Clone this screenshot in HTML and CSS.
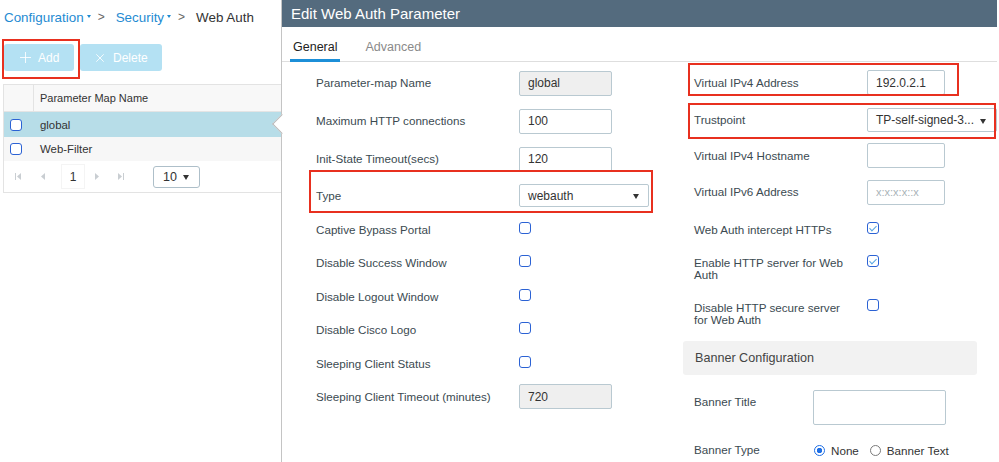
FILE: index.html
```html
<!DOCTYPE html>
<html lang="en">
<head>
<meta charset="utf-8">
<title>Edit Web Auth Parameter</title>
<link rel="stylesheet" href="styles.css">
</head>
<body>
<div class="page">
  <aside class="list-pane">
    <nav class="crumbs">
      <span class="crumb">Configuration<span class="crumb-caret"></span></span>
      <span class="crumb-sep">&gt;</span>
      <span class="crumb">Security<span class="crumb-caret"></span></span>
      <span class="crumb-sep">&gt;</span>
      <span class="crumb-current">Web Auth</span>
    </nav>
    <div class="toolbar">
      <button class="btn btn-add" type="button">
        <svg class="btn-icon" width="11" height="11" viewBox="0 0 11 11"><path d="M5.5 0v11M0 5.5h11" stroke="#ffffff" stroke-opacity="0.85" stroke-width="1"/></svg>
        <span>Add</span>
      </button>
      <button class="btn btn-delete" type="button">
        <svg class="btn-icon" width="8" height="8" viewBox="0 0 8 8"><path d="M0.3 0.3l7.4 7.4M7.7 0.3L0.3 7.7" stroke="#ffffff" stroke-opacity="0.85" stroke-width="1"/></svg>
        <span>Delete</span>
      </button>
    </div>
    <div class="grid">
      <div class="grid-head">
        <div class="grid-check"></div>
        <div class="grid-name">Parameter Map Name</div>
      </div>
      <div class="grid-row is-selected">
        <div class="grid-check"><span class="cb"></span></div>
        <div class="grid-name">global</div>
      </div>
      <div class="grid-row">
        <div class="grid-check"><span class="cb"></span></div>
        <div class="grid-name">Web-Filter</div>
      </div>
      <div class="pager">
        <svg class="pg-first" width="6" height="7" viewBox="0 0 6 7"><rect x="0" y="0" width="1" height="7" fill="#c9ced2"/><path d="M6 0v7L2 3.5z" fill="#c9ced2"/></svg>
        <svg class="pg-prev" width="4" height="7" viewBox="0 0 4 7"><path d="M4 0v7L0 3.5z" fill="#c9ced2"/></svg>
        <div class="pg-page">1</div>
        <svg class="pg-next" width="4" height="7" viewBox="0 0 4 7"><path d="M0 0v7L4 3.5z" fill="#c9ced2"/></svg>
        <svg class="pg-last" width="6" height="7" viewBox="0 0 6 7"><path d="M0 0v7L4 3.5z" fill="#c9ced2"/><rect x="5" y="0" width="1" height="7" fill="#c9ced2"/></svg>
        <div class="pg-size">10<span class="select-caret"></span></div>
      </div>
    </div>
  </aside>

  <section class="modal">
    <header class="modal-head">Edit Web Auth Parameter</header>
    <div class="tabs">
      <span class="tab is-active">General</span>
      <span class="tab">Advanced</span>
    </div>
    <div class="form">
      <div class="form-col form-col-left">
        <div class="field f-std"><label class="field-label">Parameter-map Name</label><div class="input is-disabled">global</div></div>
        <div class="field f-std"><label class="field-label">Maximum HTTP connections</label><div class="input">100</div></div>
        <div class="field f-std"><label class="field-label">Init-State Timeout(secs)</label><div class="input">120</div></div>
        <div class="field f-type"><label class="field-label">Type</label><div class="select select-type">webauth<span class="select-caret"></span></div></div>
        <div class="field f-check"><label class="field-label">Captive Bypass Portal</label><span class="cb"></span></div>
        <div class="field f-check"><label class="field-label">Disable Success Window</label><span class="cb"></span></div>
        <div class="field f-check"><label class="field-label">Disable Logout Window</label><span class="cb"></span></div>
        <div class="field f-check"><label class="field-label">Disable Cisco Logo</label><span class="cb"></span></div>
        <div class="field f-check"><label class="field-label">Sleeping Client Status</label><span class="cb"></span></div>
        <div class="field f-last"><label class="field-label">Sleeping Client Timeout (minutes)</label><div class="input is-disabled">720</div></div>
      </div>

      <div class="form-col form-col-right">
        <div class="field r-a"><label class="field-label">Virtual IPv4 Address</label><div class="input input-narrow">192.0.2.1</div></div>
        <div class="field r-b"><label class="field-label">Trustpoint</label><div class="select select-tp">TP-self-signed-3...<span class="select-caret"></span></div></div>
        <div class="field r-c"><label class="field-label">Virtual IPv4 Hostname</label><div class="input input-narrow"></div></div>
        <div class="field r-d"><label class="field-label">Virtual IPv6 Address</label><div class="input input-narrow is-placeholder">x:x:x:x::x</div></div>
        <div class="field f-check r-e"><label class="field-label">Web Auth intercept HTTPs</label><span class="cb is-checked"></span></div>
        <div class="field f-check r-f"><label class="field-label two-line">Enable HTTP server for Web Auth</label><span class="cb is-checked"></span></div>
        <div class="field f-check r-g"><label class="field-label two-line">Disable HTTP secure server for Web Auth</label><span class="cb"></span></div>
        <div class="section-head">Banner Configuration</div>
        <div class="field r-title"><label class="field-label">Banner Title</label><div class="input input-wide"></div></div>
        <div class="field r-type">
          <label class="field-label">Banner Type</label>
          <div class="radios">
            <span class="radio-opt"><span class="radio is-on"></span>None</span>
            <span class="radio-opt"><span class="radio"></span>Banner Text</span>
            <span class="radio-opt"><span class="radio"></span></span>
          </div>
        </div>
      </div>
    </div>
  </section>

  <div class="pointer"></div>
  <div class="mark mark-add"></div>
  <div class="mark mark-type"></div>
  <div class="mark mark-ipv4"></div>
  <div class="mark mark-tp"></div>
</div>
</body>
</html>
```

FILE: styles.css
```css
* { box-sizing: border-box; }
html, body { margin: 0; padding: 0; }
body {
  width: 999px;
  height: 462px;
  overflow: hidden;
  background: #ffffff;
  font-family: "Liberation Sans", Arial, Helvetica, sans-serif;
  color: #3b4a51;
}
.page { position: relative; display: flex; width: 999px; height: 462px; }

/* ---------- left list pane ---------- */
.list-pane { width: 281px; flex: none; }
.crumbs {
  display: flex; align-items: center;
  height: 20px; margin-top: 7px; padding-left: 4px;
  font-size: 13.4px; white-space: nowrap;
}
.crumb { display: inline-flex; align-items: center; color: #1f8bd2; }
.crumb-caret {
  width: 0; height: 0; margin: 0 0 2px 3px;
  border-left: 2.5px solid transparent; border-right: 2.5px solid transparent;
  border-top: 3px solid #1f8bd2;
}
.crumb-sep { margin: 0 11px 0 7px; color: #666; font-size: 12px; }
.crumb-current { color: #333; }

.toolbar { display: flex; gap: 6px; margin: 17px 0 13px 4px; }
.btn {
  display: flex; align-items: center; gap: 7px;
  height: 27px; padding: 0 0 0 16px;
  border: 0; border-radius: 3px;
  background: #b4e1f3; color: #fff;
  font: 12px "Liberation Sans", Arial, sans-serif;
}
.btn-add { width: 70px; }
.btn-delete { width: 82px; gap: 9px; }
.btn-icon { flex: none; }

.grid {
  margin-left: 3px;
  border: 1px solid #e3e3e3; border-right: 0;
  font-size: 11.4px; color: #333;
}
.grid-head { display: flex; height: 27px; background: #f8f8f8; border-bottom: 1px solid #e4e4e4; font-size: 11px; }
.grid-head .grid-check { border-right: 1px solid #e3e3e3; }
.grid-check { width: 30px; flex: none; display: flex; align-items: center; padding-left: 6px; }
.grid-name { display: flex; align-items: center; padding-left: 6px; }
.grid-row { display: flex; height: 25px; background: #f7f7f7; }
.grid-row + .grid-row { height: 24px; }
.grid-row.is-selected { background: #b7dde8; }

.pager { display: flex; align-items: center; height: 31px; padding-left: 11px; background: #fff; }
.pager svg { flex: none; }
.pg-first { margin-right: 20px; }
.pg-page {
  width: 24px; height: 25px; margin: 0 10px 0 16px;
  border: 1px solid #f4f4f4;
  display: flex; align-items: center; justify-content: center;
  font-size: 12px; color: #333;
}
.pg-next { margin-right: 19px; }
.pg-size {
  width: 47px; height: 22px; margin-left: 29px;
  border: 1px solid #aebfc9; border-radius: 3px;
  display: flex; align-items: center; justify-content: space-between;
  padding: 0 10px 0 9px;
  font-size: 12.5px; color: #333;
}

/* ---------- modal ---------- */
.modal { width: 716px; flex: none; border-left: 1px solid #c4c4c4; overflow: hidden; background: #fff; }
.modal-head {
  height: 27px; padding-left: 9px;
  background: #546b7e; color: #fff;
  font-size: 15px; line-height: 27px; white-space: nowrap;
}
.tabs {
  display: flex; align-items: flex-end;
  height: 35px; padding-left: 8px;
  border-bottom: 1px solid #dedede;
}
.tab {
  padding: 0 3px 5px; margin: 0 22px -1px 0;
  border-bottom: 3px solid transparent;
  font-size: 12.5px; line-height: 14px; color: #8a8a8a;
}
.tab.is-active { color: #222; border-bottom-color: #1c8fd8; }

.form { display: flex; padding-top: 2px; }
.form-col-left { width: 401px; flex: none; padding-left: 34px; }
.form-col-right { width: 314px; flex: none; }

.field { display: flex; align-items: center; }
.field-label { flex: none; width: 203px; font-size: 11.65px; line-height: 14px; color: #3b4a51; }
.form-col-right .field { padding-left: 11px; }
.form-col-right .field-label { width: 173px; }

.f-std { height: 38px; }
.f-type { height: 35px; }
.f-last { height: 34px; }
.f-check { height: 33.4px; align-items: flex-start; padding-top: 9px; }
.f-check .field-label { margin-top: 1px; }

.r-a { height: 37px; }
.r-b { height: 38px; }
.r-c { height: 33px; }
.r-d { height: 40px; }
.form-col-right .r-e { height: 36px; padding-top: 10px; }
.form-col-right .r-f { height: 42px; padding-top: 7px; }
.form-col-right .r-g { height: 48px; padding-top: 9px; }
.r-f .field-label { margin-top: 2px; }
.r-g .field-label { margin-top: 3px; }
.two-line { line-height: 12px; padding-right: 22px; }

.input {
  width: 93px; height: 25px;
  border: 1px solid #b9c9d1; border-radius: 2px;
  padding-left: 8px;
  display: flex; align-items: center;
  font-size: 12px; color: #333; background: #fff;
}
.input.is-disabled { background: #efefef; }
.input-narrow { width: 78px; }
.input.is-placeholder { color: #a9b3b8; font-size: 11px; }
.input-wide { width: 133px; height: 35px; }

.select {
  height: 23px;
  border: 1px solid #b9c9d1; border-radius: 2px;
  padding: 0 9px 0 8px;
  display: flex; align-items: center; justify-content: space-between;
  font-size: 12px; color: #333; background: #fff;
  white-space: nowrap;
}
.select-type { width: 130px; }
.select-tp { width: 132px; height: 24px; padding-right: 10px; }
.select-caret {
  flex: none; width: 0; height: 0; margin-top: 2px;
  border-left: 3.5px solid transparent; border-right: 3.5px solid transparent;
  border-top: 5px solid #333;
}

.cb {
  position: relative; flex: none;
  width: 12px; height: 12px;
  border: 1.5px solid #2b62d4; border-radius: 3px;
  background: #fff;
}
.cb.is-checked::after {
  content: "";
  position: absolute; left: 3px; top: 0.5px;
  width: 3px; height: 6px;
  border-right: 1.2px solid #58a6e2; border-bottom: 1.2px solid #58a6e2;
  transform: rotate(45deg);
}

.section-head {
  margin-top: 3px; width: 294px; height: 34px;
  padding-left: 12px; border-radius: 3px;
  background: #f2f2f2;
  display: flex; align-items: center;
  font-size: 12.6px; color: #444;
}
.form-col-right .r-title { height: 45px; margin-top: 10px; align-items: flex-start; }
.r-title .field-label { width: 119px; margin-top: 10px; }
.r-title .input { margin-top: 5px; }
.form-col-right .r-type { height: 60px; margin-top: 3px; align-items: flex-start; padding-top: 10px; }
.r-type .field-label { width: 119px; }
.radios { display: flex; flex-wrap: wrap; width: 150px; row-gap: 4px; column-gap: 11px; margin-left: 1px; }
.radio-opt { display: flex; align-items: center; gap: 6px; height: 14px; font-size: 11.65px; color: #333; white-space: nowrap; }
.radio-opt:nth-child(3) { flex-basis: 100%; }
.radio {
  flex: none; width: 11px; height: 11px; border-radius: 50%;
  border: 1px solid #7a7a7a; background: #fff;
}
.radio.is-on { border: 1.5px solid #1f6fe5; background: radial-gradient(circle, #1f6fe5 0 2.5px, #fff 3px); }

/* ---------- overlays ---------- */
.pointer {
  position: absolute; left: 275px; top: 117px;
  width: 14px; height: 14px;
  background: #fff;
  border-left: 1px solid #b9b9b9; border-bottom: 1px solid #b9b9b9;
  transform: rotate(45deg);
}
.mark { position: absolute; border: 2px solid #e8301f; }
.mark-add { left: 2px; top: 39px; width: 78px; height: 40px; }
.mark-type { left: 309px; top: 170px; width: 344px; height: 43px; }
.mark-ipv4 { left: 688px; top: 63px; width: 271px; height: 33px; }
.mark-tp { left: 688px; top: 103px; width: 308px; height: 36px; }
```
